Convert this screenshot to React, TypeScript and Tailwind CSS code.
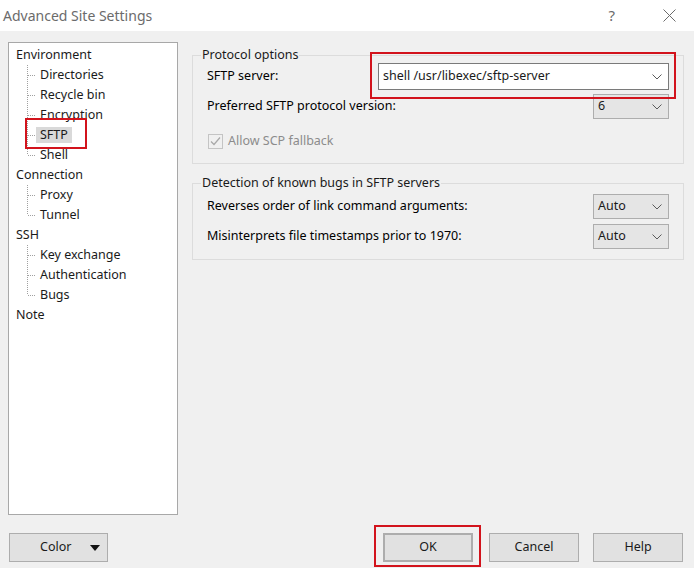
import { ReactNode } from 'react'

const font = { fontFamily: '"Noto Sans", "Open Sans", sans-serif' }

type Node = { label: string; children?: string[] }

const tree: Node[] = [
  { label: 'Environment', children: ['Directories', 'Recycle bin', 'Encryption', 'SFTP', 'Shell'] },
  { label: 'Connection', children: ['Proxy', 'Tunnel'] },
  { label: 'SSH', children: ['Key exchange', 'Authentication', 'Bugs'] },
  { label: 'Note' },
]

function Chevron() {
  return (
    <svg width="10" height="6" viewBox="0 0 10 6" className="shrink-0">
      <polyline points="0.5,0.5 5,5 9.5,0.5" fill="none" stroke="#5a5a5a" strokeWidth="1" />
    </svg>
  )
}

function Branch({ last }: { last: boolean }) {
  // dotted tree connector
  return (
    <svg width="9" height="20" viewBox="0 0 9 20" className="shrink-0">
      <line x1="0.5" y1="0" x2="0.5" y2={last ? 10 : 20} stroke="#a0a0a0" strokeDasharray="1 1" />
      <line x1="1" y1="10.5" x2="9" y2="10.5" stroke="#a0a0a0" strokeDasharray="1 1" />
    </svg>
  )
}

function Combo({ value, className }: { value: string; className: string }) {
  return (
    <div className={`flex items-center justify-between pl-[4px] pr-[6px] text-[#1a1a1a] ${className}`}>
      <span>{value}</span>
      <Chevron />
    </div>
  )
}

function Group({ title, children, className }: { title: string; children: ReactNode; className: string }) {
  return (
    <div className={`relative border border-[#dcdcdc] px-[14px] ${className}`}>
      <span className="absolute -top-[10px] left-[8px] bg-[#f0f0f0] px-px leading-[18px] text-[#1a1a1a]">{title}</span>
      {children}
    </div>
  )
}

function Btn({ children, className = '' }: { children: ReactNode; className?: string }) {
  return (
    <div className={`flex h-[29px] w-[90px] items-center justify-center border border-[#adadad] bg-[#e1e1e1] text-[#1a1a1a] ${className}`}>
      {children}
    </div>
  )
}

export default function App() {
  return (
    <div className="flex h-[568px] w-[694px] flex-col overflow-hidden bg-[#f0f0f0] text-[12.5px]" style={font}>
      {/* title bar */}
      <div className="flex h-[31px] shrink-0 items-center bg-white pl-[3px] text-[14px] text-[#6b6b6b]">
        <span className="flex-1">Advanced Site Settings</span>
        <span className="mr-[48px] text-[15px]">?</span>
        <svg width="13" height="13" viewBox="0 0 13 13" className="mr-[18px]">
          <path d="M0.5 0.5 L12.5 12.5 M12.5 0.5 L0.5 12.5" stroke="#6b6b6b" strokeWidth="1" />
        </svg>
      </div>

      <div className="flex flex-1 flex-col px-[8px] pt-[11px] pb-[6px]">
        <div className="flex flex-1 gap-[14px]">
          {/* tree */}
          <div className="relative w-[170px] border border-[#a8a8a8] bg-white pt-[2px] text-[#1a1a1a]">
            {tree.map(n => (
              <div key={n.label}>
                <div className="flex h-[20px] items-center pl-[7px]">{n.label}</div>
                {n.children?.map((c, i) => (
                  <div key={c} className="flex h-[20px] items-center pl-[18px]">
                    <Branch last={i === n.children!.length - 1} />
                    <span className={`flex h-[16px] items-center px-[4px] ${c === 'SFTP' ? 'bg-[#d9d9d9]' : ''}`}>{c}</span>
                  </div>
                ))}
              </div>
            ))}
            <div className="absolute left-[16px] top-[75px] h-[31px] w-[62px] border-2 border-[#d2131c]" />
          </div>

          {/* settings */}
          <div className="flex flex-1 flex-col gap-[19px] pt-[13px] pr-[2px]">
            <Group title="Protocol options" className="pt-[7px] pb-[13px]">
              <div className="relative flex h-[27px] items-center justify-between">
                <span>SFTP server:</span>
                <Combo value="shell /usr/libexec/sftp-server" className="h-[27px] w-[291px] border border-[#7a7a7a] bg-white" />
                <div className="absolute -top-[11px] -right-[7px] h-[47px] w-[306px] border-2 border-[#d2131c]" />
              </div>
              <div className="mt-[4px] flex h-[25px] items-center justify-between">
                <span>Preferred SFTP protocol version:</span>
                <Combo value="6" className="h-[25px] w-[76px] border border-[#adadad] bg-[#e5e5e5]" />
              </div>
              <div className="mt-[13px] flex h-[18px] items-center gap-[5px] pl-px text-[#8c8c8c]">
                <svg width="15" height="15" viewBox="0 0 15 15">
                  <rect x="0.5" y="0.5" width="14" height="14" fill="#f0f0f0" stroke="#c4c4c4" />
                  <polyline points="3,7.5 6,10.5 12,3.5" fill="none" stroke="#a8a8a8" strokeWidth="1.2" />
                </svg>
                <span>Allow SCP fallback</span>
              </div>
            </Group>

            <Group title="Detection of known bugs in SFTP servers" className="pt-[10px] pb-[10px]">
              <div className="flex h-[25px] items-center justify-between">
                <span>Reverses order of link command arguments:</span>
                <Combo value="Auto" className="h-[25px] w-[76px] border border-[#adadad] bg-[#e5e5e5]" />
              </div>
              <div className="mt-[5px] flex h-[25px] items-center justify-between">
                <span>Misinterprets file timestamps prior to 1970:</span>
                <Combo value="Auto" className="h-[25px] w-[76px] border border-[#adadad] bg-[#e5e5e5]" />
              </div>
            </Group>
          </div>
        </div>

        {/* buttons */}
        <div className="mt-[18px] flex items-center pl-px">
          <div className="flex h-[29px] w-[99px] items-center border border-[#adadad] bg-[#e1e1e1] pl-[30px] pr-[7px] text-[#1a1a1a]">
            <span className="flex-1">Color</span>
            <svg width="10" height="6" viewBox="0 0 10 6"><polygon points="0,0 10,0 5,6" fill="#111" /></svg>
          </div>
          <div className="flex-1" />
          <div className="relative">
            <Btn className="border-2 border-[#1979ca]">OK</Btn>
            <div className="absolute -left-[9px] -top-[8px] h-[42px] w-[107px] border-2 border-[#d2131c]" />
          </div>
          <Btn className="ml-[16px]">Cancel</Btn>
          <Btn className="ml-[14px] mr-[3px]">Help</Btn>
        </div>
      </div>
    </div>
  )
}
